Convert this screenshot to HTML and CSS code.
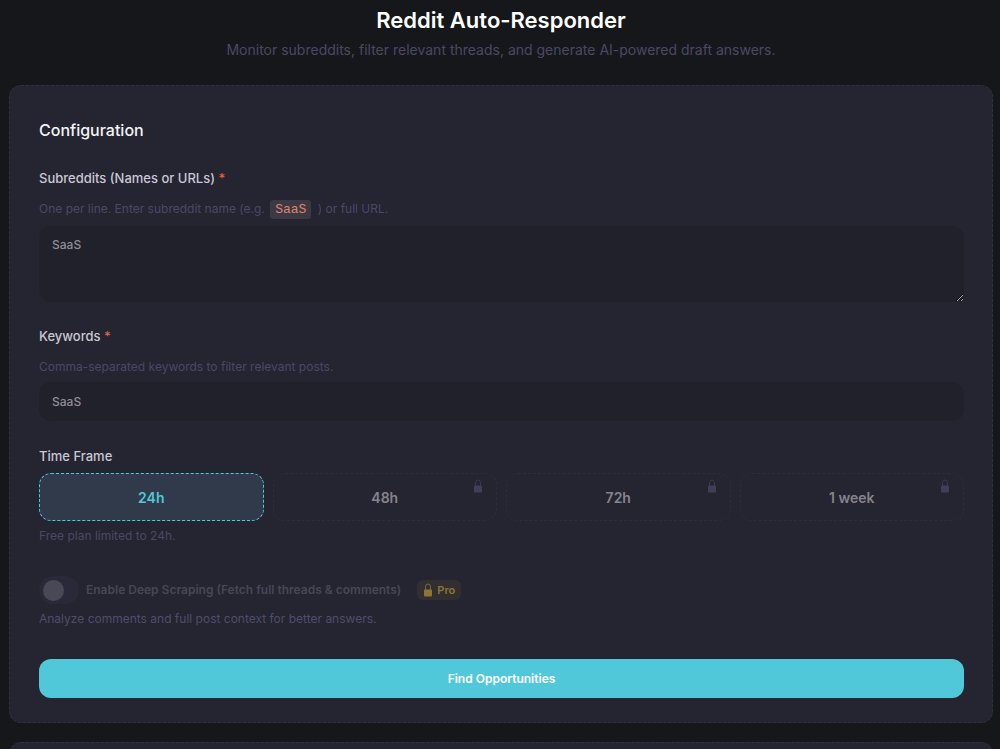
FILE: index.html
```html
<!DOCTYPE html>
<html lang="en">
<head>
<meta charset="utf-8">
<title>Reddit Auto-Responder</title>
<link rel="stylesheet" href="styles.css">
</head>
<body>
<svg class="sprite" aria-hidden="true">
  <symbol id="lock" viewBox="0 0 10 14">
    <path d="M2.5 7V3.8a2.5 2.8 0 0 1 5 0V7" fill="none" stroke="currentColor" stroke-width="0.8"/>
    <rect x="1" y="6.5" width="8" height="7" rx="1" fill="currentColor"/>
  </symbol>
</svg>
<main class="page">
  <header class="header">
    <h1 class="title">Reddit Auto-Responder</h1>
    <p class="subtitle">Monitor subreddits, filter relevant threads, and generate AI-powered draft answers.</p>
  </header>
  <form class="card">
    <h2 class="card-title">Configuration</h2>
    <div class="field">
      <label class="label" for="subs">Subreddits (Names or URLs) <span class="required">*</span></label>
      <p class="hint hint-code">One per line. Enter subreddit name (e.g. <code class="code">SaaS</code> ) or full URL.</p>
      <textarea class="control area" id="subs">SaaS</textarea>
    </div>
    <div class="field">
      <label class="label" for="keys">Keywords <span class="required">*</span></label>
      <p class="hint hint-top">Comma-separated keywords to filter relevant posts.</p>
      <input class="control" id="keys" type="text" value="SaaS">
    </div>
    <div class="field frame-field" role="group" aria-labelledby="frame">
      <span class="label" id="frame">Time Frame</span>
      <div class="frames">
        <button class="frame selected" type="button">24h</button>
        <button class="frame" type="button" disabled>48h<svg class="frame-lock"><use href="#lock"/></svg></button>
        <button class="frame" type="button" disabled>72h<svg class="frame-lock"><use href="#lock"/></svg></button>
        <button class="frame" type="button" disabled>1 week<svg class="frame-lock"><use href="#lock"/></svg></button>
      </div>
      <p class="hint">Free plan limited to 24h.</p>
    </div>
    <div class="deep">
      <div class="deep-row">
        <input class="switch" id="deep" type="checkbox" disabled>
        <label class="deep-label" for="deep">Enable Deep Scraping (Fetch full threads &amp; comments)</label>
        <span class="badge"><svg class="badge-lock"><use href="#lock"/></svg>Pro</span>
      </div>
      <p class="hint hint-bright">Analyze comments and full post context for better answers.</p>
    </div>
    <button class="submit" type="submit">Find Opportunities</button>
  </form>
  <section class="card card-next"></section>
</main>
</body>
</html>
```
FILE: styles.css
```css
* { box-sizing: border-box; }
html, body { height: 100%; overflow: hidden; }
body {
  margin: 0;
  background: #16171a;
  color: #fff;
  font-family: Inter, "Liberation Sans", sans-serif;
}
h1, h2, p { margin: 0; }
button, input, textarea { font-family: inherit; }
.sprite { display: none; }
.page {
  display: flex;
  flex-direction: column;
  height: 100%;
  padding: 6px 7px 0 9px;
  overflow: hidden;
}
.header { text-align: center; padding-bottom: 25px; }
.title { font-size: 22px; line-height: 28px; font-weight: 600; }
.subtitle { margin-top: 6px; font-size: 14px; line-height: 20px; color: #4b4865; }
.card {
  flex-shrink: 0;
  padding: 32px 28px 24px 29px;
  background: #252431;
  border: 1px dashed #32313f;
  border-radius: 12px;
}
.card-title { font-size: 16px; line-height: 24px; font-weight: 500; color: #f4f4f6; }
.field { display: flex; flex-direction: column; margin-top: 24px; }
.card-title + .field { margin-top: 26px; }
.frame-field { margin-top: 25px; }
.label { font-size: 13px; line-height: 20px; font-weight: 500; color: #c9c8d4; }
.required { color: #e5603f; }
.hint { font-size: 12px; line-height: 18px; color: #4b4865; }
.hint-code { margin: 11px 0 7px; line-height: 20px; }
.hint-top { margin: 12px 0 6px; }
.hint-bright { color: #504d6c; }
.code {
  display: inline-block;
  margin: 0 3px 0 2px;
  padding: 0 5px;
  border-radius: 3px;
  background: #3a3944;
  color: #e08468;
  font: 13px/19px "Liberation Mono", monospace;
}
.control {
  width: 100%;
  height: 39px;
  padding: 0 13px;
  border: 0;
  border-radius: 12px;
  background: #21212b;
  color: #8f8e97;
  font-size: 12px;
  font-weight: 500;
  line-height: 18px;
}
.area { display: block; height: 76px; padding: 10px 13px; resize: vertical; }
.frames { display: grid; grid-template-columns: repeat(4, 1fr); gap: 9px; margin: 7px 0 6px; }
.frame {
  position: relative;
  height: 48px;
  padding: 0;
  border: 1px dashed #2d2c39;
  border-radius: 12px;
  background: transparent;
  color: #85848c;
  font-size: 14px;
  font-weight: 600;
}
.selected { border-color: #4fc8db; background: #313a4b; color: #4fc8db; }
.frame-lock { position: absolute; top: 5px; right: 13px; width: 10px; height: 14px; color: #403e58; }
.deep { margin-top: 31px; }
.deep-row { display: flex; align-items: center; height: 28px; margin-bottom: 6px; }
.switch {
  appearance: none;
  display: flex;
  align-items: center;
  width: 40px;
  height: 28px;
  margin: 0 7px 0 0;
  padding: 0 4px;
  border-radius: 14px;
  background: #2a2939;
}
.switch::before { content: ""; width: 21px; height: 21px; border-radius: 50%; background: #494855; }
.deep-label { font-size: 12px; line-height: 18px; font-weight: 600; color: #484754; }
.badge {
  display: flex;
  align-items: center;
  gap: 4px;
  height: 20px;
  margin-left: 16px;
  padding: 0 6px;
  border-radius: 6px;
  background: #322f31;
  color: #8c7535;
  font-size: 11px;
  font-weight: 600;
}
.badge-lock { width: 10px; height: 14px; }
.submit {
  display: block;
  width: 100%;
  height: 39px;
  margin-top: 31px;
  border: 0;
  border-radius: 12px;
  background: #50c8da;
  color: #fff;
  font-size: 12px;
  font-weight: 600;
}
.card-next { margin-top: 19px; min-height: 80px; }
```
